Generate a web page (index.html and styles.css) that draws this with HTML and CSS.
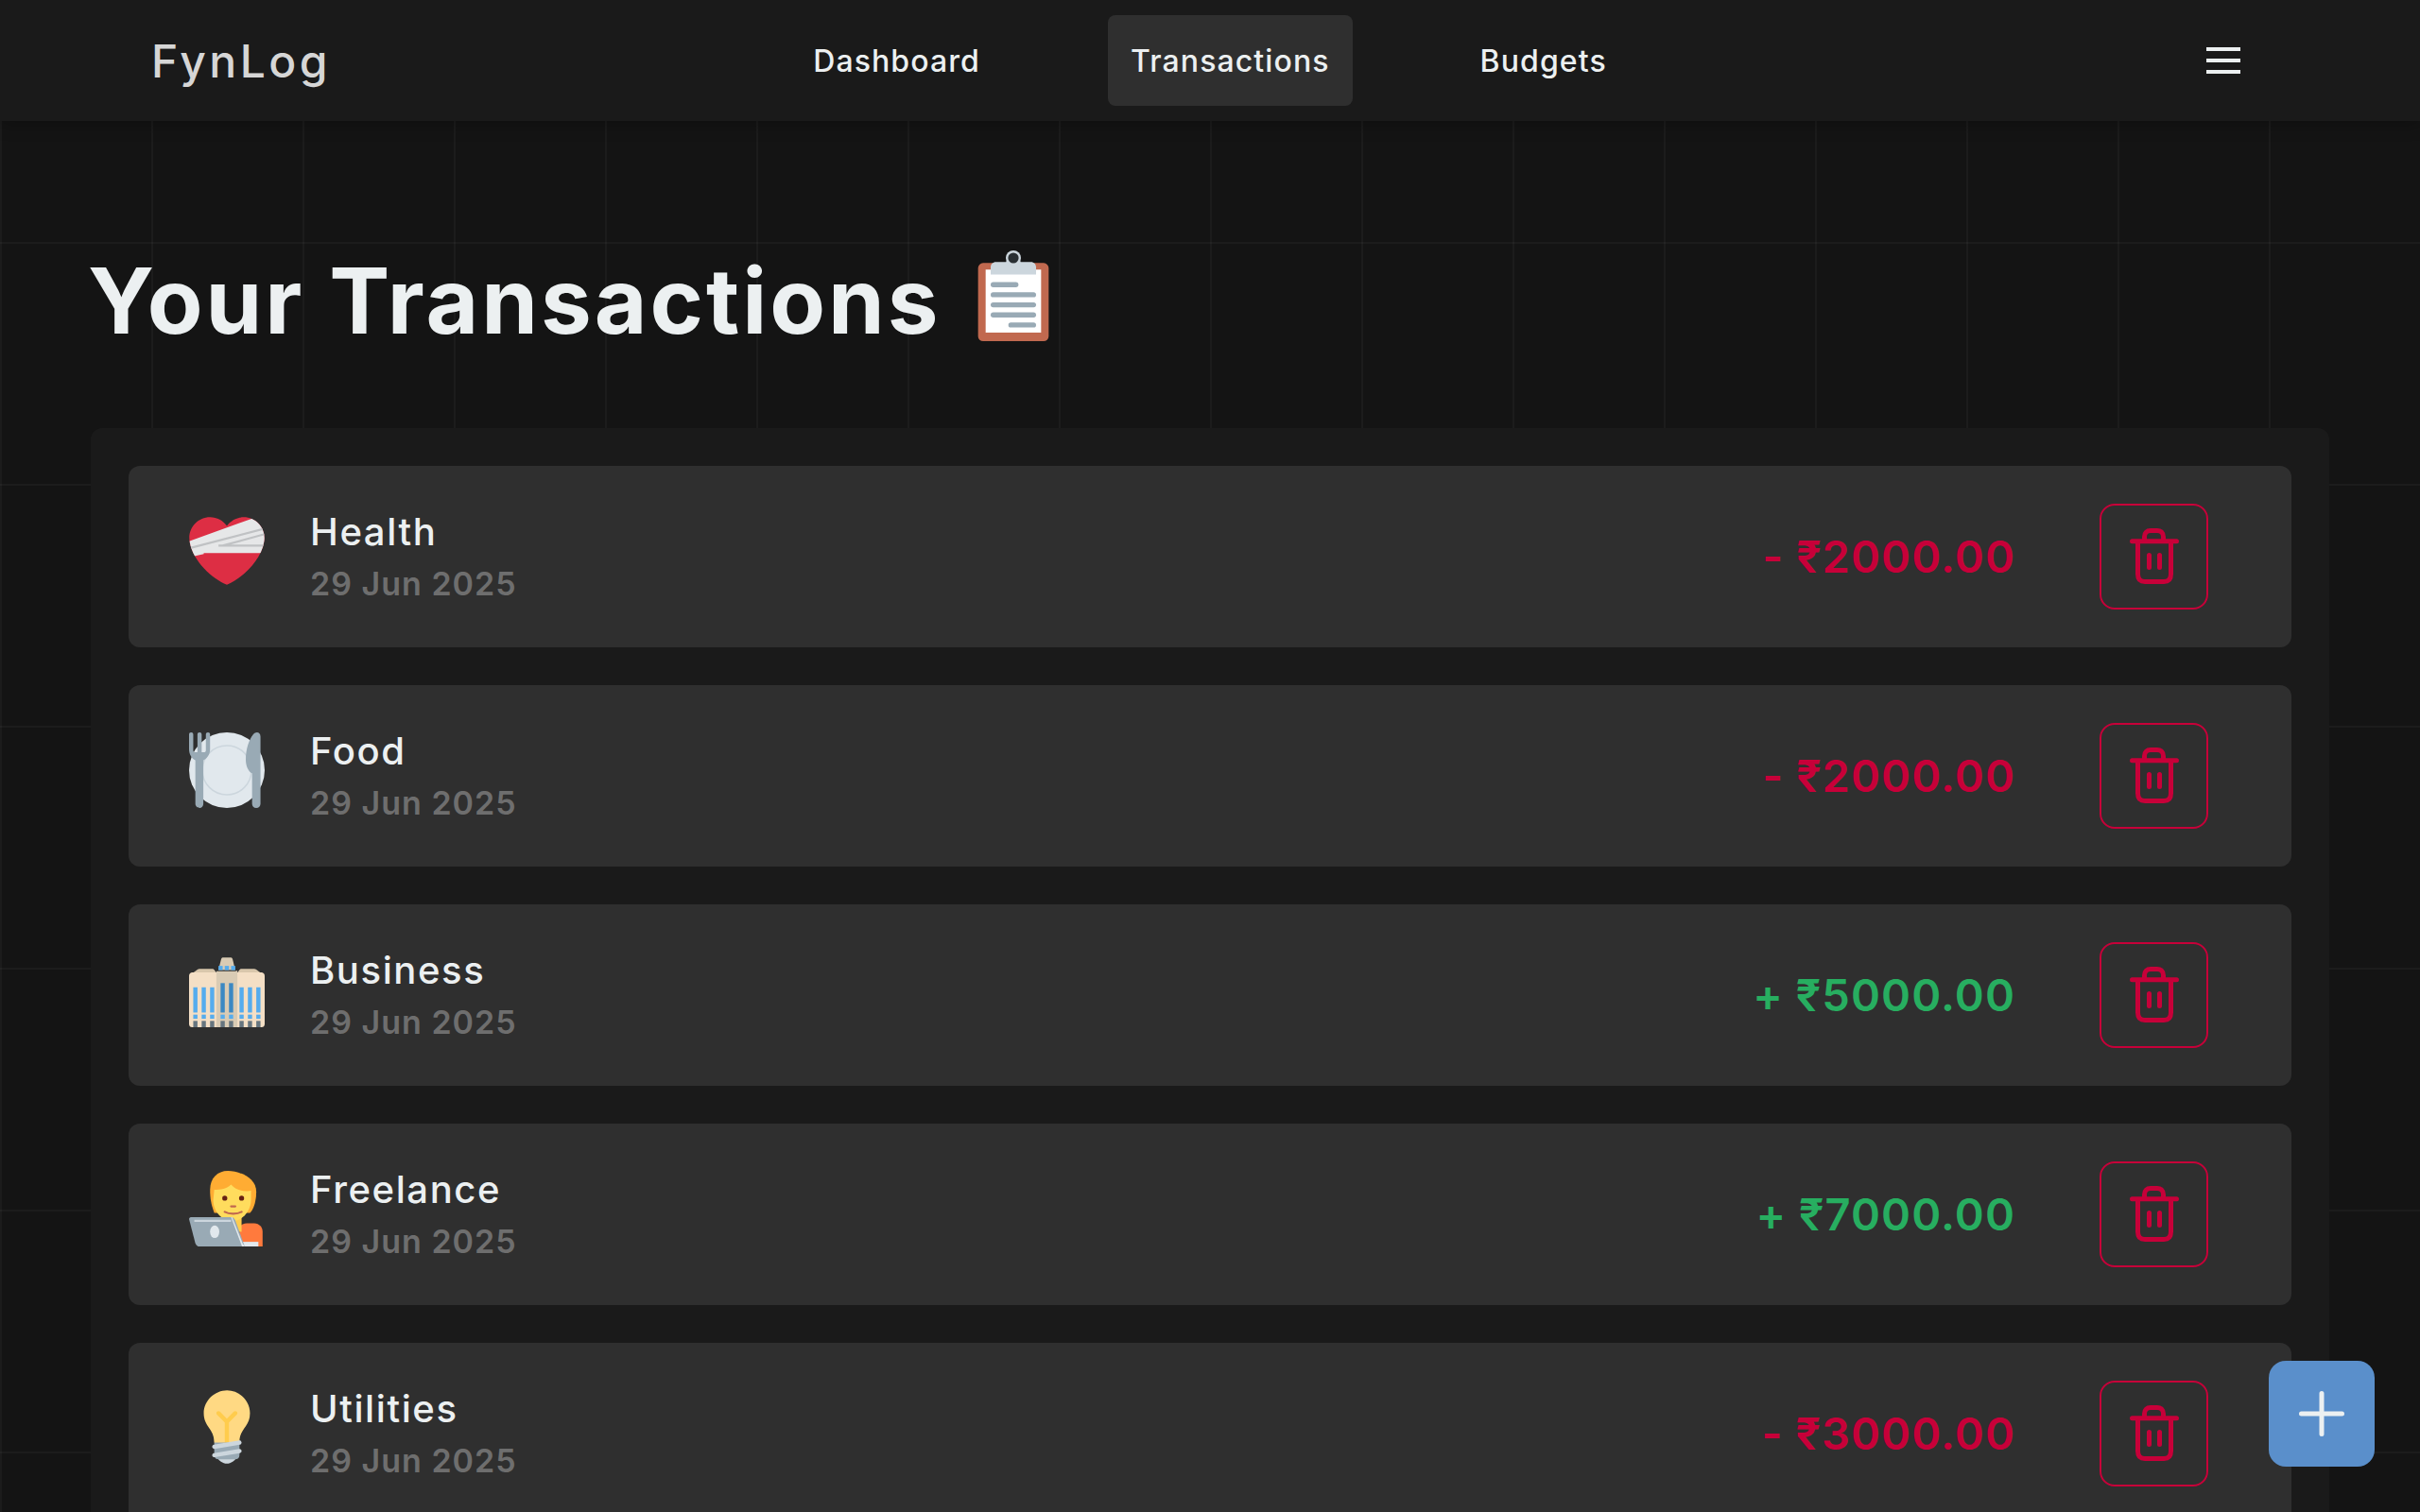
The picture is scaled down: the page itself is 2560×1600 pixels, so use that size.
FILE: index.html
```html
<!DOCTYPE html>
<html lang="en">
  <head>
    <meta charset="UTF-8" />
    <meta name="viewport" content="width=device-width, initial-scale=1.0" />
    <title>FynLog - Transactions</title>
    <link rel="stylesheet" href="styles.css">
  </head>
  <body>
    <!-- Shared trash icon -->
    <svg class="defs" width="0" height="0" aria-hidden="true">
      <symbol id="trash" viewBox="0 0 64 64">
        <path d="M8.500 15.700H55.500M14.500 16V50.500C14.500 55.500 17 58.500 22 58.500H42C47 58.500 49.500 55.500 49.500 50.500V16M21.500 15V11C21.500 7 24 4.500 28 4.500H35C39 4.500 41.500 7 41.500 11V15M26.500 30.500V43.500M37.500 30.500V43.500" fill="none" stroke="currentColor" stroke-width="5" stroke-linecap="round" stroke-linejoin="round" />
      </symbol>
    </svg>

    <nav class="navbar">
      <a class="logo">FynLog</a>
      <div class="nav-links">
        <a class="nav-link">Dashboard</a>
        <a class="nav-link active">Transactions</a>
        <a class="nav-link">Budgets</a>
      </div>
      <button class="menu-btn" aria-label="Menu">
        <span></span><span></span><span></span>
      </button>
    </nav>

    <main class="page">
      <h1 class="page-title">
        Your Transactions
        <svg class="title-emoji" viewBox="0 0 36 36">
          <rect x="4" y="5" width="28" height="31" rx="2" fill="#C1694F" />
          <rect x="7" y="7.600" width="22" height="25" fill="#FFF" />
          <path d="M9 9.600V6.600C9 5.500 9.900 4.600 11 4.600H15.100C15.500 3.300 16.600 2.200 18 2.200S20.500 3.300 20.900 4.600H25C26.100 4.600 27 5.500 27 6.600V9.600Z" fill="#CCD6DD" />
          <circle cx="18" cy="3" r="3" fill="#CCD6DD" />
          <circle cx="18" cy="3" r="2.100" fill="#292F33" />
          <g fill="#99AAB5">
            <rect x="9" y="12.600" width="11" height="2" rx="1" />
            <rect x="9" y="16.600" width="18" height="2" rx="1" />
            <rect x="9" y="20.600" width="18" height="2" rx="1" />
            <rect x="9" y="24.600" width="18" height="2" rx="1" />
            <rect x="16" y="28.600" width="11" height="2" rx="1" />
          </g>
        </svg>
      </h1>

      <section class="tx-panel">
        <article class="tx-card">
          <div class="tx-left">
            <svg class="tx-emoji" viewBox="0 0 36 36">
              <clipPath id="heartClip">
                <path d="M35.885 11.833c0-5.450-4.418-9.868-9.867-9.868-3.308 0-6.227 1.633-8.018 4.129-1.791-2.496-4.710-4.129-8.017-4.129-5.450 0-9.868 4.417-9.868 9.868 0 .772.098 1.520.266 2.241C1.751 22.587 11.216 31.568 18 34.034c6.783-2.466 16.249-11.447 17.617-19.959.170-.721.268-1.469.268-2.242z" />
              </clipPath>
              <g clip-path="url(#heartClip)">
                <rect width="36" height="36" fill="#DD2E44" />
                <path d="M-1 13.700L31 2.200 37 4V19H7V19.500L2.500 20.500Z" fill="#E6E7E8" />
                <path d="M1 16.500L36 7.400M16 15.500L36 10M14 15.500H36" fill="none" stroke="#C0C2C4" stroke-width="1" />
              </g>
            </svg>
            <div class="tx-info">
              <div class="tx-name">Health</div>
              <div class="tx-date">29 Jun 2025</div>
            </div>
          </div>
          <div class="tx-right">
            <span class="tx-amount expense">- ₹2000.00</span>
            <button class="delete-btn" aria-label="Delete"><svg class="trash-icon"><use href="#trash" /></svg></button>
          </div>
        </article>

        <article class="tx-card">
          <div class="tx-left">
            <svg class="tx-emoji" viewBox="0 0 36 36">
              <circle cx="18" cy="18" r="18" fill="#E1E8ED" />
              <circle cx="18" cy="18" r="11.700" fill="none" stroke="#CCD6DD" stroke-width=".700" />
              <path d="M0 1C0 .400.400 0 1 0S2 .400 2 1V8.500C2 9.300 2.500 9.500 3 9.500H4V1C4 .400 4.400 0 5 0S6 .400 6 1V9.500H7C7.500 9.500 8 9.300 8 8.500V1C8 .400 8.400 0 9 0S10 .400 10 1V8C10 10.500 8.500 12.500 6.800 13.300V34C6.800 35.200 6 36 5 36S3 35.200 3 34V13.300C1.300 12.500 0 10.500 0 8Z" fill="#99AAB5" />
              <path d="M34 2V34C34 35.200 33.200 36 32 36S30 35.200 30 34V19.500C28 18.500 27 15.500 27 13 27 8 28.500 3.500 30.500 1 31 .300 31.800 0 32.300 0 33.300 0 34 .800 34 2Z" fill="#99AAB5" />
            </svg>
            <div class="tx-info">
              <div class="tx-name">Food</div>
              <div class="tx-date">29 Jun 2025</div>
            </div>
          </div>
          <div class="tx-right">
            <span class="tx-amount expense">- ₹2000.00</span>
            <button class="delete-btn" aria-label="Delete"><svg class="trash-icon"><use href="#trash" /></svg></button>
          </div>
        </article>

        <article class="tx-card">
          <div class="tx-left">
            <svg class="tx-emoji" viewBox="0 0 36 36">
              <path d="M2 10L4 8.500C4.300 8.300 4.600 8.200 5 8.200H11C11.500 8.200 11.800 8.400 12 8.700L13 10H23L24 8.700C24.200 8.400 24.500 8.200 25 8.200H31C31.400 8.200 31.700 8.300 32 8.500L34 10Z" fill="#D9C7AC" />
              <path d="M0 11.500C0 10.500.800 9.900 1.500 9.900H34.500C35.200 9.900 36 10.500 36 11.500V34.500C36 35.400 35.400 36 34.500 36H1.500C.600 36 0 35.400 0 34.500Z" fill="#F4DFC5" />
              <path d="M14 9.300H22L23 9V36H13V9.300Z" fill="#D9CBB4" />
              <path d="M14 8.800L15.300 3.500C15.500 3 15.900 2.800 16.300 2.800H19.700C20.100 2.800 20.500 3 20.700 3.500L22 8.800Z" fill="#D9CBB4" />
              <g fill="#55ACEE">
                <rect x="14" y="6.800" width="2" height="2" /><rect x="17" y="6.800" width="2" height="2" /><rect x="20" y="6.800" width="2" height="2" />
                <rect x="2" y="17" width="2" height="12" /><rect x="6" y="17" width="2" height="12" /><rect x="10" y="17" width="2" height="12" />
                <rect x="24" y="17" width="2" height="12" /><rect x="28" y="17" width="2" height="12" /><rect x="32" y="17" width="2" height="12" />
                <rect x="2" y="30" width="2" height="2" /><rect x="6" y="30" width="2" height="2" /><rect x="10" y="30" width="2" height="2" />
                <rect x="15" y="30" width="2" height="2" /><rect x="19" y="30" width="2" height="2" />
                <rect x="24" y="30" width="2" height="2" /><rect x="28" y="30" width="2" height="2" /><rect x="32" y="30" width="2" height="2" />
              </g>
              <g fill="#3B88C3">
                <rect x="15" y="15" width="2" height="14" /><rect x="19" y="15" width="2" height="14" />
              </g>
              <g fill="#66757F">
                <rect x="2" y="33" width="2" height="3" /><rect x="6" y="33" width="2" height="3" /><rect x="10" y="33" width="2" height="3" />
                <rect x="15" y="33" width="2" height="3" /><rect x="19" y="33" width="2" height="3" />
                <rect x="24" y="33" width="2" height="3" /><rect x="28" y="33" width="2" height="3" /><rect x="32" y="33" width="2" height="3" />
              </g>
            </svg>
            <div class="tx-info">
              <div class="tx-name">Business</div>
              <div class="tx-date">29 Jun 2025</div>
            </div>
          </div>
          <div class="tx-right">
            <span class="tx-amount income">+ ₹5000.00</span>
            <button class="delete-btn" aria-label="Delete"><svg class="trash-icon"><use href="#trash" /></svg></button>
          </div>
        </article>

        <article class="tx-card">
          <div class="tx-left">
            <svg class="tx-emoji" viewBox="0 0 36 36">
              <path d="M24 36V28C24 26 25.500 25 27.500 25H31C33.500 25 35 27 35 29V36Z" fill="#FF7A3D" />
              <rect x="19" y="21" width="6" height="8" fill="#FFCC4D" />
              <path d="M10 9C10 3.500 13.500 0 18.500 0 23.500 0 32 3 32 10 32 14 31 18 29 20H12C10.500 16 10 13 10 9Z" fill="#FFAC33" />
              <path d="M12 9C15 9 18 8.500 20 6.500 22 9 25.500 10 29.500 9.500V14C29.500 19 25.500 24 20.500 24S11.500 19 11.500 14Z" fill="#FFDC5D" />
              <circle cx="17" cy="13" r="1.200" fill="#662113" />
              <circle cx="25" cy="13" r="1.200" fill="#662113" />
              <rect x="19.500" y="16.400" width="3" height="1" rx=".500" fill="#C1694F" />
              <path d="M17 19.500C19 20.700 23 20.700 25 19.500" fill="none" stroke="#C1694F" stroke-width="1" stroke-linecap="round" />
              <rect x="23" y="33.800" width="10" height="2.200" fill="#E1E8ED" />
              <path d="M0 23C0 22 .800 22 1.500 22H20C21 22 21.500 22.500 22 23.500L26.500 36H5C4 36 3.500 35.500 3 34.500Z" fill="#99AAB5" />
              <path d="M20.500 22L25.500 34.500 26.500 36H25.200L20 22Z" fill="#E1E8ED" />
              <rect x="2.500" y="23.300" width="17.500" height="1" fill="#CCD6DD" />
              <ellipse cx="12.200" cy="29" rx="2.200" ry="3" fill="#E1E8ED" />
            </svg>
            <div class="tx-info">
              <div class="tx-name">Freelance</div>
              <div class="tx-date">29 Jun 2025</div>
            </div>
          </div>
          <div class="tx-right">
            <span class="tx-amount income">+ ₹7000.00</span>
            <button class="delete-btn" aria-label="Delete"><svg class="trash-icon"><use href="#trash" /></svg></button>
          </div>
        </article>

        <article class="tx-card">
          <div class="tx-left">
            <svg class="tx-emoji" viewBox="0 0 36 36">
              <path d="M29 11.060c0 6.439-5 7.439-5 13.440 0 3.098-3.123 3.359-5.500 3.359-2.053 0-6.586-.779-6.586-3.361C11.914 18.500 7 17.500 7 11.060 7 5.029 12.285.140 18.083.140 23.883.140 29 5.029 29 11.060z" fill="#FFD983" />
              <path d="M22.167 32.500c0 .828-2.234 2.500-4.167 2.500-1.933 0-4.167-1.672-4.167-2.500 0-.828 2.233-.500 4.167-.500 1.933 0 4.167-.328 4.167.500z" fill="#CCD6DD" />
              <path d="M22.707 10.293c-.391-.391-1.023-.391-1.414 0L18 13.586l-3.293-3.293c-.391-.391-1.023-.391-1.414 0s-.391 1.023 0 1.414L17 15.414V26c0 .553.448 1 1 1s1-.447 1-1V15.414l3.707-3.707c.391-.391.391-1.023 0-1.414z" fill="#FFCC4D" />
              <path d="M24 31c0 1.104-.896 2-2 2h-8c-1.104 0-2-.896-2-2v-6h12v6z" fill="#99AAB5" />
              <path d="M11.999 32c-.480 0-.904-.347-.985-.836-.091-.544.277-1.060.822-1.150l12-2c.544-.098 1.060.277 1.150.822.091.544-.277 1.060-.822 1.150l-12 2c-.055.010-.111.014-.165.014zm0-4c-.480 0-.904-.347-.985-.836-.091-.544.277-1.060.822-1.150l12-2c.544-.097 1.060.277 1.150.822.091.544-.277 1.060-.822 1.150l-12 2c-.055.010-.111.014-.165.014z" fill="#CCD6DD" />
            </svg>
            <div class="tx-info">
              <div class="tx-name">Utilities</div>
              <div class="tx-date">29 Jun 2025</div>
            </div>
          </div>
          <div class="tx-right">
            <span class="tx-amount expense">- ₹3000.00</span>
            <button class="delete-btn" aria-label="Delete"><svg class="trash-icon"><use href="#trash" /></svg></button>
          </div>
        </article>
      </section>
    </main>

    <!-- Add transaction -->
    <button class="fab" aria-label="Add transaction">
      <svg viewBox="0 0 48 48" width="48" height="48">
        <path d="M24 2.500V45.500M2.500 24H45.500" fill="none" stroke="#ECF0F1" stroke-width="5" stroke-linecap="round" />
      </svg>
    </button>
  </body>
</html>
```

FILE: styles.css
```css
/* Basic reset and page background */
* {
  box-sizing: border-box;
}

html,
body {
  height: 100%;
  overflow: hidden;
}

body {
  margin: 0;
  font-family: Inter, "Liberation Sans", sans-serif;
  color: #ecf0f1;
  background-color: #141414;
  background-image:
    linear-gradient(rgba(255, 255, 255, 0.035) 2px, transparent 2px),
    linear-gradient(90deg, rgba(255, 255, 255, 0.035) 2px, transparent 2px);
  background-size: 160px 256px;
}

.defs {
  display: block;
  height: 0;
}

/* Navbar */
.navbar {
  display: grid;
  grid-template-columns: 1fr auto 1fr;
  align-items: center;
  height: 128px;
  padding: 0 160px;
  background-color: #1a1a1a;
  box-shadow: 0 4px 16px rgba(0, 0, 0, 0.25);
}

.logo {
  font-size: 48px;
  font-weight: 500;
  letter-spacing: 3.5px;
  color: #d6d6d6;
}

.nav-links {
  display: flex;
  gap: 111px;
}

.nav-link {
  display: flex;
  align-items: center;
  height: 96px;
  padding: 0 24px;
  border-radius: 8px;
  font-size: 32px;
  font-weight: 500;
  letter-spacing: 1.1px;
  color: #ecf0f1;
}

.nav-link.active {
  background-color: #2f2f2f;
}

.menu-btn {
  justify-self: end;
  display: flex;
  flex-direction: column;
  gap: 8px;
  width: 36px;
  padding: 0;
  margin-right: 30px;
  border: none;
  background: none;
}

.menu-btn span {
  display: block;
  height: 4px;
  background-color: #ecf0f1;
}

/* Page heading */
.page {
  padding: 142px 96px 0;
}

.page-title {
  display: flex;
  align-items: center;
  gap: 28px;
  height: 96px;
  margin: 0 0 87px -3px;
  font-size: 96px;
  font-weight: 700;
  line-height: 96px;
  letter-spacing: 3px;
}

.title-emoji {
  width: 96px;
  height: 96px;
  margin-top: -10px;
}

/* Transaction list */
.tx-panel {
  display: flex;
  flex-direction: column;
  gap: 40px;
  padding: 40px;
  border-radius: 12px;
  background-color: #1a1a1a;
}

.tx-card {
  display: flex;
  align-items: center;
  justify-content: space-between;
  flex-shrink: 0;
  height: 192px;
  padding: 0 88px 0 64px;
  border-radius: 12px;
  background-color: #2f2f2f;
}

.tx-left {
  display: flex;
  align-items: center;
  gap: 48px;
}

.tx-emoji {
  width: 80px;
  height: 80px;
  margin-bottom: 12px;
}

.tx-name {
  font-size: 40px;
  font-weight: 500;
  line-height: 48px;
  letter-spacing: 1.6px;
  color: #ecf0f1;
}

.tx-date {
  margin-top: 9px;
  font-size: 34px;
  font-weight: 600;
  line-height: 44px;
  letter-spacing: 1px;
  color: #6e6e6e;
}

.tx-right {
  display: flex;
  align-items: center;
  gap: 89px;
}

.tx-amount {
  margin-bottom: 2px;
  font-size: 47px;
  font-weight: 600;
  letter-spacing: 1.1px;
}

.expense {
  color: #c70039;
}

.income {
  color: #27ae60;
}

.delete-btn {
  display: flex;
  align-items: center;
  justify-content: center;
  width: 115px;
  height: 112px;
  padding: 0;
  border: 2px solid #c70039;
  border-radius: 16px;
  background: none;
  color: #c70039;
}

.trash-icon {
  width: 64px;
  height: 64px;
}

/* Floating add button */
.fab {
  position: fixed;
  right: 48px;
  bottom: 48px;
  display: flex;
  align-items: center;
  justify-content: center;
  width: 112px;
  height: 112px;
  padding: 0;
  border: none;
  border-radius: 18px;
  background-color: #5a8fcb;
}
```
